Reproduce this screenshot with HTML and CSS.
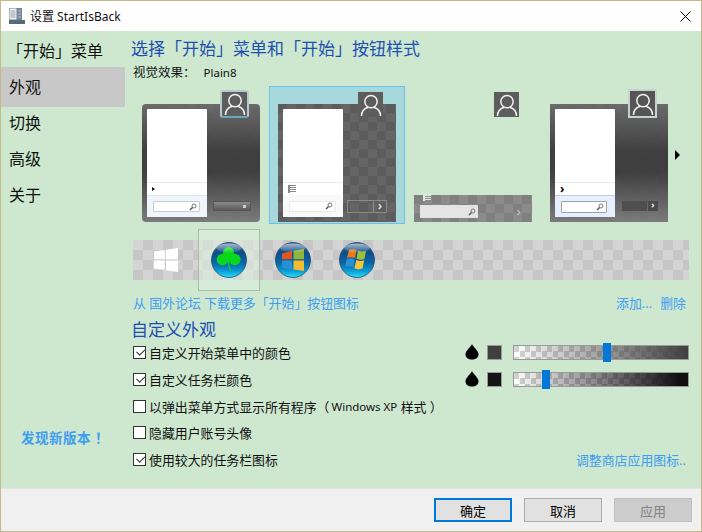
FILE: index.html
```html
<!DOCTYPE html>
<html lang="zh-CN">
<head>
<meta charset="utf-8">
<title>设置 StartIsBack</title>
<link rel="stylesheet" href="styles.css">
</head>
<body>
<svg class="defs" width="0" height="0">
  <defs>
    <linearGradient id="orb" x1="0" y1="0" x2="0" y2="1">
      <stop offset="0" stop-color="#2a5c88"/>
      <stop offset=".3" stop-color="#0b4f8a"/>
      <stop offset=".6" stop-color="#0a68a6"/>
      <stop offset=".82" stop-color="#0a9ed8"/>
      <stop offset="1" stop-color="#2ce0fc"/>
    </linearGradient>
    <linearGradient id="orbShine" x1="0" y1="0" x2="0" y2="1">
      <stop offset="0" stop-color="#fff" stop-opacity=".6"/>
      <stop offset="1" stop-color="#fff" stop-opacity=".05"/>
    </linearGradient>
    <symbol id="user" viewBox="0 0 24 24">
      <circle cx="12" cy="8.600" r="6.200" fill="none" stroke="#f2f2f2" stroke-width="1.500"/>
      <path d="M2.500 23c0-5 3.500-7.700 6.600-8.700M21.500 23c0-5-3.500-7.700-6.600-8.700" fill="none" stroke="#f2f2f2" stroke-width="1.500"/>
    </symbol>
    <symbol id="lens" viewBox="0 0 8 8">
      <circle cx="5" cy="3" r="2" fill="none" stroke="#777" stroke-width="1"/>
      <path d="M3.500 4.500 1 7" stroke="#555" stroke-width="1.400"/>
    </symbol>
    <symbol id="drop" viewBox="0 0 14 16">
      <path d="M7 0C6 3 0.500 6.500 0.500 10.200 0.500 13.500 3.400 15.500 7 15.500s6.500-2 6.500-5.300C13.500 6.500 8 3 7 0z" fill="#000"/>
    </symbol>
  </defs>
</svg>

<div class="window">
  <header class="titlebar">
    <svg class="app-icon" width="16" height="16" viewBox="0 0 16 16">
      <rect x="0" y="0" width="8" height="12" fill="#f4f5f7" stroke="#6a7886" stroke-width="1"/>
      <rect x="8" y="0" width="5" height="12" fill="#76889a"/>
      <path d="M1.500 3h5M1.500 5h5M1.500 7h5M1.500 9h5" stroke="#8a97a4"/>
      <path d="M9.500 3h2M9.500 6h2M9.500 9h2" stroke="#c9d2da"/>
      <rect x="0" y="12" width="16" height="4" fill="#56697e"/>
    </svg>
    <span class="title-text">设置 StartIsBack</span>
    <svg class="close" width="11" height="11" viewBox="0 0 11 11">
      <path d="M0.500 0.500 10.500 10.500M10.500 0.500 0.500 10.500" stroke="#000" stroke-width="1"/>
    </svg>
  </header>

  <div class="content">
    <nav class="side">
      <div class="nav-item nav-first">「开始」菜单</div>
      <div class="nav-item nav-active">外观</div>
      <div class="nav-item">切换</div>
      <div class="nav-item">高级</div>
      <div class="nav-item">关于</div>
      <a class="update">发现新版本<span class="bang">！</span></a>
    </nav>

    <main class="main">
      <h1 class="heading">选择「开始」菜单和「开始」按钮样式</h1>
      <div class="effect"><span>视觉效果：</span><span class="effect-name">Plain8</span></div>

      <div class="thumbs">
        <div class="thumb-cell">
          <div class="menu menu-glass menu-rounded">
            <div class="menu-left">
              <div class="menu-list"></div>
              <div class="menu-all"><span class="tri"></span></div>
              <div class="menu-search tint-blue"><div class="search"><svg class="lens"><use href="#lens"/></svg></div></div>
            </div>
            <div class="menu-right"><div class="power power-glass"><i class="dot"></i></div></div>
            <div class="avatar avatar-frame-blue"><svg class="avatar-img"><use href="#user"/></svg></div>
          </div>
        </div>

        <div class="thumb-cell thumb-selected">
          <div class="menu menu-flat">
            <div class="menu-left menu-left-square">
              <div class="menu-list"></div>
              <div class="menu-all"><span class="lines"></span></div>
              <div class="menu-search"><div class="search search-light"><svg class="lens"><use href="#lens"/></svg></div></div>
            </div>
            <div class="menu-right"><div class="power power-outline"><span class="power-arrow">›</span></div></div>
            <div class="avatar avatar-flat"><svg class="avatar-img"><use href="#user"/></svg></div>
          </div>
        </div>

        <div class="thumb-cell thumb-bare">
          <div class="avatar-solo"><svg class="avatar-img"><use href="#user"/></svg></div>
          <div class="bar">
            <span class="lines lines-light"></span>
            <div class="bar-row">
              <div class="search search-bar"><svg class="lens"><use href="#lens"/></svg></div>
              <span class="bar-arrow">›</span>
            </div>
          </div>
        </div>

        <div class="thumb-cell">
          <div class="menu menu-glass">
            <div class="menu-left menu-left-square">
              <div class="menu-list"></div>
              <div class="menu-all"><span class="chev">›</span></div>
              <div class="menu-search tint-blue2"><div class="search search-blue"><svg class="lens"><use href="#lens"/></svg></div></div>
            </div>
            <div class="menu-right"><div class="power power-dark"><span class="power-btn"></span><span class="power-next">›</span></div></div>
            <div class="avatar avatar-frame-grey"><svg class="avatar-img"><use href="#user"/></svg></div>
          </div>
        </div>
        <span class="next-arrow"></span>
      </div>

      <div class="orbs">
        <div class="orb-cell">
          <svg width="26" height="26" viewBox="0 0 26 26"><path d="M1 4.500 11.800 3v9.300H1zM13 2.800 25 1v11.300H13zM1 13.500h10.800v9.300L1 21.400zM13 13.500h12V25l-12-1.800z" fill="#fff"/></svg>
        </div>
        <div class="orb-cell orb-selected">
          <svg class="orb" viewBox="0 0 36 36">
            <circle cx="18" cy="18" r="17.500" fill="url(#orb)" stroke="#1f4a6c" stroke-width=".8"/>
            <g fill="#0ad81c">
              <circle cx="17.500" cy="10.500" r="5.500"/>
              <circle cx="11.500" cy="17.500" r="5.800"/>
              <circle cx="23.800" cy="17.500" r="5.800"/>
              <path d="M14 13h7v6h-7z"/>
            </g>
            <path d="M17.500 17c0 5 .5 9 2.500 12" fill="none" stroke="#0ad81c" stroke-width="1.300"/>
            <ellipse cx="18" cy="6" rx="12.500" ry="4.500" fill="url(#orbShine)"/>
          </svg>
        </div>
        <div class="orb-cell">
          <svg class="orb" viewBox="0 0 36 36">
            <circle cx="18" cy="18" r="17.500" fill="url(#orb)" stroke="#1f4a6c" stroke-width=".8"/>
            <path d="M7 11.500 17 9v8.300H7z" fill="#e2561d"/>
            <path d="M18.500 8.700 29 7v10.300H18.500z" fill="#8fb53a"/>
            <path d="M7 18.500h10v9l-10-2z" fill="#2d8fd3"/>
            <path d="M18.500 18.500H29V29l-10.500-1.500z" fill="#f5bb2e"/>
            <ellipse cx="18" cy="6" rx="12.500" ry="4.500" fill="url(#orbShine)"/>
          </svg>
        </div>
        <div class="orb-cell">
          <svg class="orb" viewBox="0 0 36 36">
            <circle cx="18" cy="18" r="17.500" fill="url(#orb)" stroke="#1f4a6c" stroke-width=".8"/>
            <path d="M10 8c2.500-1.200 5-1 7.500 0L16 16c-2.500-1-5-1.200-8-.2z" fill="#ef7a1a"/>
            <path d="M19 8.500c2.500 1 5 1.500 8 .2L25.500 17c-3 1.200-5.500.6-8-.3z" fill="#9cc13c"/>
            <path d="M7.700 17c3-1 5.500-.8 8 .2L14 25c-2.500-1-5-1.200-8-.2z" fill="#2d8fd3"/>
            <path d="M17.200 18c2.500 1 5 1.500 8 .2L23.500 26.500c-3 1.200-5.500.6-8-.3z" fill="#f7c534"/>
            <ellipse cx="18" cy="6" rx="12.500" ry="4.500" fill="url(#orbShine)"/>
          </svg>
        </div>
      </div>

      <div class="links">
        <a>从 国外论坛 下载更多「开始」按钮图标</a>
        <span class="links-right"><a>添加...</a><a>删除</a></span>
      </div>

      <h2 class="section">自定义外观</h2>

      <div class="opts">
        <div class="opt">
          <label class="check"><span class="box on"></span>自定义开始菜单中的颜色</label>
          <div class="color">
            <svg class="drop"><use href="#drop"/></svg>
            <span class="swatch swatch-1"></span>
            <div class="slider"><div class="fill fill-1"></div><span class="handle" style="left:51%"></span></div>
          </div>
        </div>
        <div class="opt">
          <label class="check"><span class="box on"></span>自定义任务栏颜色</label>
          <div class="color">
            <svg class="drop"><use href="#drop"/></svg>
            <span class="swatch swatch-2"></span>
            <div class="slider"><div class="fill fill-2"></div><span class="handle" style="left:16%"></span></div>
          </div>
        </div>
        <div class="opt">
          <label class="check"><span class="box"></span>以弹出菜单方式显示所有程序（<span class="latin">Windows XP</span>&nbsp;样式 ）</label>
        </div>
        <div class="opt">
          <label class="check"><span class="box"></span>隐藏用户账号头像</label>
        </div>
        <div class="opt">
          <label class="check"><span class="box on"></span>使用较大的任务栏图标</label>
          <a class="store">调整商店应用图标..</a>
        </div>
      </div>
    </main>
  </div>

  <footer class="foot">
    <button class="btn btn-default">确定</button>
    <button class="btn">取消</button>
    <button class="btn btn-disabled">应用</button>
  </footer>
</div>
</body>
</html>
```

FILE: styles.css
```css
:root {
  --cjk: "Noto Sans", "Noto Sans CJK SC", sans-serif;
  --green: #cde8cf;
  --link: #3f9df2;
  --head: #1f4fb0;
}
* { box-sizing: border-box; }
html, body { margin: 0; padding: 0; }
body { width: 702px; height: 532px; overflow: hidden; font-family: var(--cjk); color: #000; }
.defs { position: absolute; }

.window {
  width: 702px; height: 532px;
  border: 1px solid #c5ba85;
  display: flex; flex-direction: column;
  background: var(--green);
}
.titlebar {
  height: 30px; flex: none; background: #fff;
  display: flex; align-items: center;
  padding: 0 0 0 8px;
}
.app-icon { flex: none; margin-top: -1px; }
.title-text { font-size: 12px; margin-left: 5px; color: #111; }
.close { margin-left: auto; margin-right: 10px; }

.content { flex: 1; display: flex; min-height: 0; }
.side {
  width: 124px; flex: none;
  display: flex; flex-direction: column;
}
.nav-item {
  height: 36px; padding-left: 8px;
  font-size: 16px; line-height: 32px; color: #111;
}
.nav-first { padding-left: 6px; white-space: nowrap; line-height: 40px; }
.nav-active { height: 40px; line-height: 40px; background: #c8c8c8; }
.update {
  margin-top: auto; margin-bottom: 41px; margin-left: 20px;
  font-size: 13.500px; letter-spacing: .5px; font-weight: 700; color: #3f9df2; white-space: nowrap;
}
.bang { margin-left: 4px; }

.main { flex: 1; min-width: 0; padding: 7px 12px 0 6px; display: flex; flex-direction: column; }
.heading { margin: 0; font-size: 17px; line-height: 22px; font-weight: 400; color: var(--head); white-space: nowrap; }
.effect { margin: 4px 0 0 2px; font-size: 12.500px; line-height: 18px; display: flex; gap: 8px; color: #111; }
.effect-name { font-size: 11.500px; }

.thumbs { margin-top: 4px; height: 138px; display: flex; position: relative; margin-left: 2px; margin-right: -9px; }
.thumb-cell { width: 136px; height: 138px; padding: 18px 9px 2px; flex: none; position: relative; }
.thumb-selected { background: #a6d8dc; border: 1px solid #6cc0ee; padding: 17px 8px 1px; }
.menu {
  width: 118px; height: 118px; position: relative;
  display: flex; padding: 5px;
  --check: conic-gradient(#656565 25%, #5c5c5c 0 50%, #656565 0 75%, #5c5c5c 0);
}
.menu-flat { background: var(--check) 0 0 / 18px 18px; }
.menu-glass {
  background:
    linear-gradient(180deg, rgba(110,110,110,.8) 0%, rgba(60,60,60,.9) 40%, rgba(60,60,60,.9) 58%, rgba(130,130,130,.8) 100%),
    var(--check) 0 0 / 18px 18px;
}
.menu-rounded { border-radius: 4px; background-color: #666; }
.menu-left {
  width: 60px; flex: none; background: #fff;
  display: flex; flex-direction: column; border-radius: 1px;
}
.menu-list { flex: 1; }
.menu-all { height: 13px; border-top: 1px solid #e3ecf4; display: flex; align-items: center; padding-left: 5px; }
.menu-search { height: 22px; display: flex; align-items: center; padding: 0 5px 0 6px; background: #f9f9f9; }
.tint-blue { background: #f0f5fb; border-top: 1px solid #dde6f0; }
.tint-blue2 { background: #e6effd; border-top: 1px solid #c6cbd2; }
.search { width: 47px; height: 11px; background: #fff; border: 1px solid #c8ccd0; border-radius: 1px; display: flex; justify-content: flex-end; align-items: center; padding-right: 2px; }
.search-light { border-color: #e8e8e8; }
.search-blue { border-color: #9aa2aa; width: 46px; height: 12px; }
.lens { width: 8px; height: 8px; display: block; }
.menu-right { flex: 1; display: flex; align-items: flex-end; justify-content: center; padding: 0 0 6px 0; }
.power { width: 38px; height: 10px; }
.power-glass { background: linear-gradient(#8a8a8a, #5a5a5a); border: 1px solid #555; border-radius: 1px; display: flex; justify-content: flex-end; align-items: center; padding-right: 4px; margin-left: 2px; }
.dot { width: 3px; height: 3px; background: #ccc; display: block; }
.power-outline { height: 13px; border: 1px solid #8a8a8a; display: flex; justify-content: flex-end; margin-bottom: -2px; width: 40px; }
.power-arrow { width: 13px; border-left: 1px solid #8a8a8a; color: #ddd; font-size: 12px; line-height: 9px; text-align: center; font-weight: 700; }
.power-dark { display: flex; gap: 1px; width: 36px; height: 10px; margin-left: 2px; }
.power-btn { flex: 1; background: #4f4f4f; }
.power-next { width: 10px; background: #4a4a4a; color: #fff; font-size: 9px; line-height: 8px; text-align: center; font-weight: 700; }
.tri { width: 0; height: 0; border-left: 3px solid #111; border-top: 2.500px solid transparent; border-bottom: 2.500px solid transparent; }
.chev { font-size: 12px; line-height: 10px; font-weight: 700; color: #000; }
.lines { width: 8px; height: 8px; display: block; background: repeating-linear-gradient(#888 0 1px, transparent 1px 2px); border-left: 2px solid #888; }
.lines-light { background: repeating-linear-gradient(#dce8dc 0 1px, transparent 1px 2px); border-left-color: #dce8dc; position: absolute; left: 9px; top: -2px; }

.avatar { position: absolute; display: flex; align-items: center; justify-content: center; }
.avatar-img { width: 24px; height: 24px; display: block; }
.avatar-frame-blue { left: 78px; top: -14px; width: 29px; height: 28px; background: #5d5d5d; border: 2px solid #b9c9d0; border-bottom-color: #6aa7b8; border-radius: 3px; }
.avatar-frame-grey { left: 78px; top: -15px; width: 29px; height: 29px; background: #555; border: 2px solid #c9d2cf; }
.avatar-flat { left: 80px; top: -12px; width: 25px; height: 25px; background: #5d5d5d; }

.thumb-bare { display: flex; flex-direction: column; justify-content: flex-end; padding-bottom: 2px; }
.avatar-solo { position: absolute; left: 89px; top: 6px; width: 25px; height: 25px; background: #5d5d5d; display: flex; align-items: center; justify-content: center; }
.bar { position: relative; height: 27px; width: 118px; background: conic-gradient(#8b8b8b 25%, #808080 0 50%, #8b8b8b 0 75%, #808080 0) 0 0 / 18px 18px; display: flex; align-items: center; }
.bar-row { display: flex; width: 100%; align-items: center; padding: 6px 11px 0 6px; justify-content: space-between; }
.search-bar { width: 58px; height: 13px; background: #e4e4e4; border: 0; }
.bar-arrow { color: #b5b5b5; font-size: 12px; line-height: 8px; font-weight: 700; }
.next-arrow { position: absolute; top: 64px; left: 542px; width: 0; height: 0; border-left: 5px solid #000; border-top: 5.500px solid transparent; border-bottom: 5.500px solid transparent; }

.orbs {
  margin: 5px 0 0 2px; height: 62px; position: relative;
  display: flex; align-items: center;
}
.orbs::before {
  content: ""; position: absolute; left: 0; right: 0; top: 11px; height: 40px;
  background: conic-gradient(#c6c6c6 25%, #d4d4d4 0 50%, #c6c6c6 0 75%, #d4d4d4 0) 0 0 / 20px 20px;
}
.orb-cell { width: 64px; height: 62px; position: relative; display: flex; align-items: center; justify-content: center; }
.orb-cell:first-child { width: 65px; }
.orb-selected { background: rgba(222,238,222,.6); border: 1px solid #a9bda9; width: 62px; margin-right: 1px; }
.orb { width: 36px; height: 36px; display: block; }

.links {
  margin: 2px 3px 0 2px; height: 20px; font-size: 12.900px; line-height: 20px;
  color: var(--link); display: flex; justify-content: space-between; white-space: nowrap;
}
.links-right { display: flex; gap: 8px; }

.section { margin: 7px 0 0 0; font-size: 17px; line-height: 20px; font-weight: 400; color: var(--head); }
.opts { margin-top: -1px; display: flex; flex-direction: column; margin-left: 2px; }
.opt { height: 26.850px; display: flex; align-items: center; justify-content: space-between; }
.check { display: flex; align-items: center; font-size: 12.900px; color: #111; white-space: nowrap; }
.latin { font-size: 11.500px; margin-left: 2px; }
.box { width: 13px; height: 13px; border: 1px solid #333; background: #fff; margin-right: 3px; flex: none; position: relative; }
.box.on::after { content: ""; position: absolute; left: 2px; top: 1px; width: 7px; height: 4px; border-left: 1.500px solid #333; border-bottom: 1.500px solid #333; transform: rotate(-45deg) translate(0, 1px); }

.color { display: flex; align-items: center; }
.drop { width: 14px; height: 16px; display: block; margin-right: 8px; }
.swatch { width: 15px; height: 15px; border: 1px solid #9a9a9a; margin-right: 11px; }
.swatch-1 { background: #3f3f3f; }
.swatch-2 { background: #141414; }
.slider { width: 176px; height: 15px; border: 1px solid #9a9a9a; position: relative; background: conic-gradient(#fff 25%, #d4d4d4 0 50%, #fff 0 75%, #d4d4d4 0) 0 0 / 11px 11px; }
.fill { height: 100%; }
.fill-1 { background: linear-gradient(90deg, rgba(63,63,63,0), #3f3f3f); }
.fill-2 { background: linear-gradient(90deg, rgba(16,16,16,0), #101010 95%); }
.handle { position: absolute; top: -3px; width: 8px; height: 19px; background: #0078d7; }
.store { font-size: 12.900px; color: var(--link); white-space: nowrap; margin-right: 3px; }

.foot {
  height: 43px; flex: none; background: #f0f0f0; border-top: 1px solid #e4e4e4;
  display: flex; justify-content: flex-end; align-items: flex-start; gap: 12px;
  padding: 9px 9px 0 0;
}
.btn {
  width: 78px; height: 24px; padding: 0;
  background: #e1e1e1; border: 1px solid #adadad;
  font-family: var(--cjk); font-size: 13px; color: #000;
}
.btn-default { border: 2px solid #0078d7; }
.btn-disabled { background: #cccccc; border-color: #bfbfbf; color: #838383; }
```
